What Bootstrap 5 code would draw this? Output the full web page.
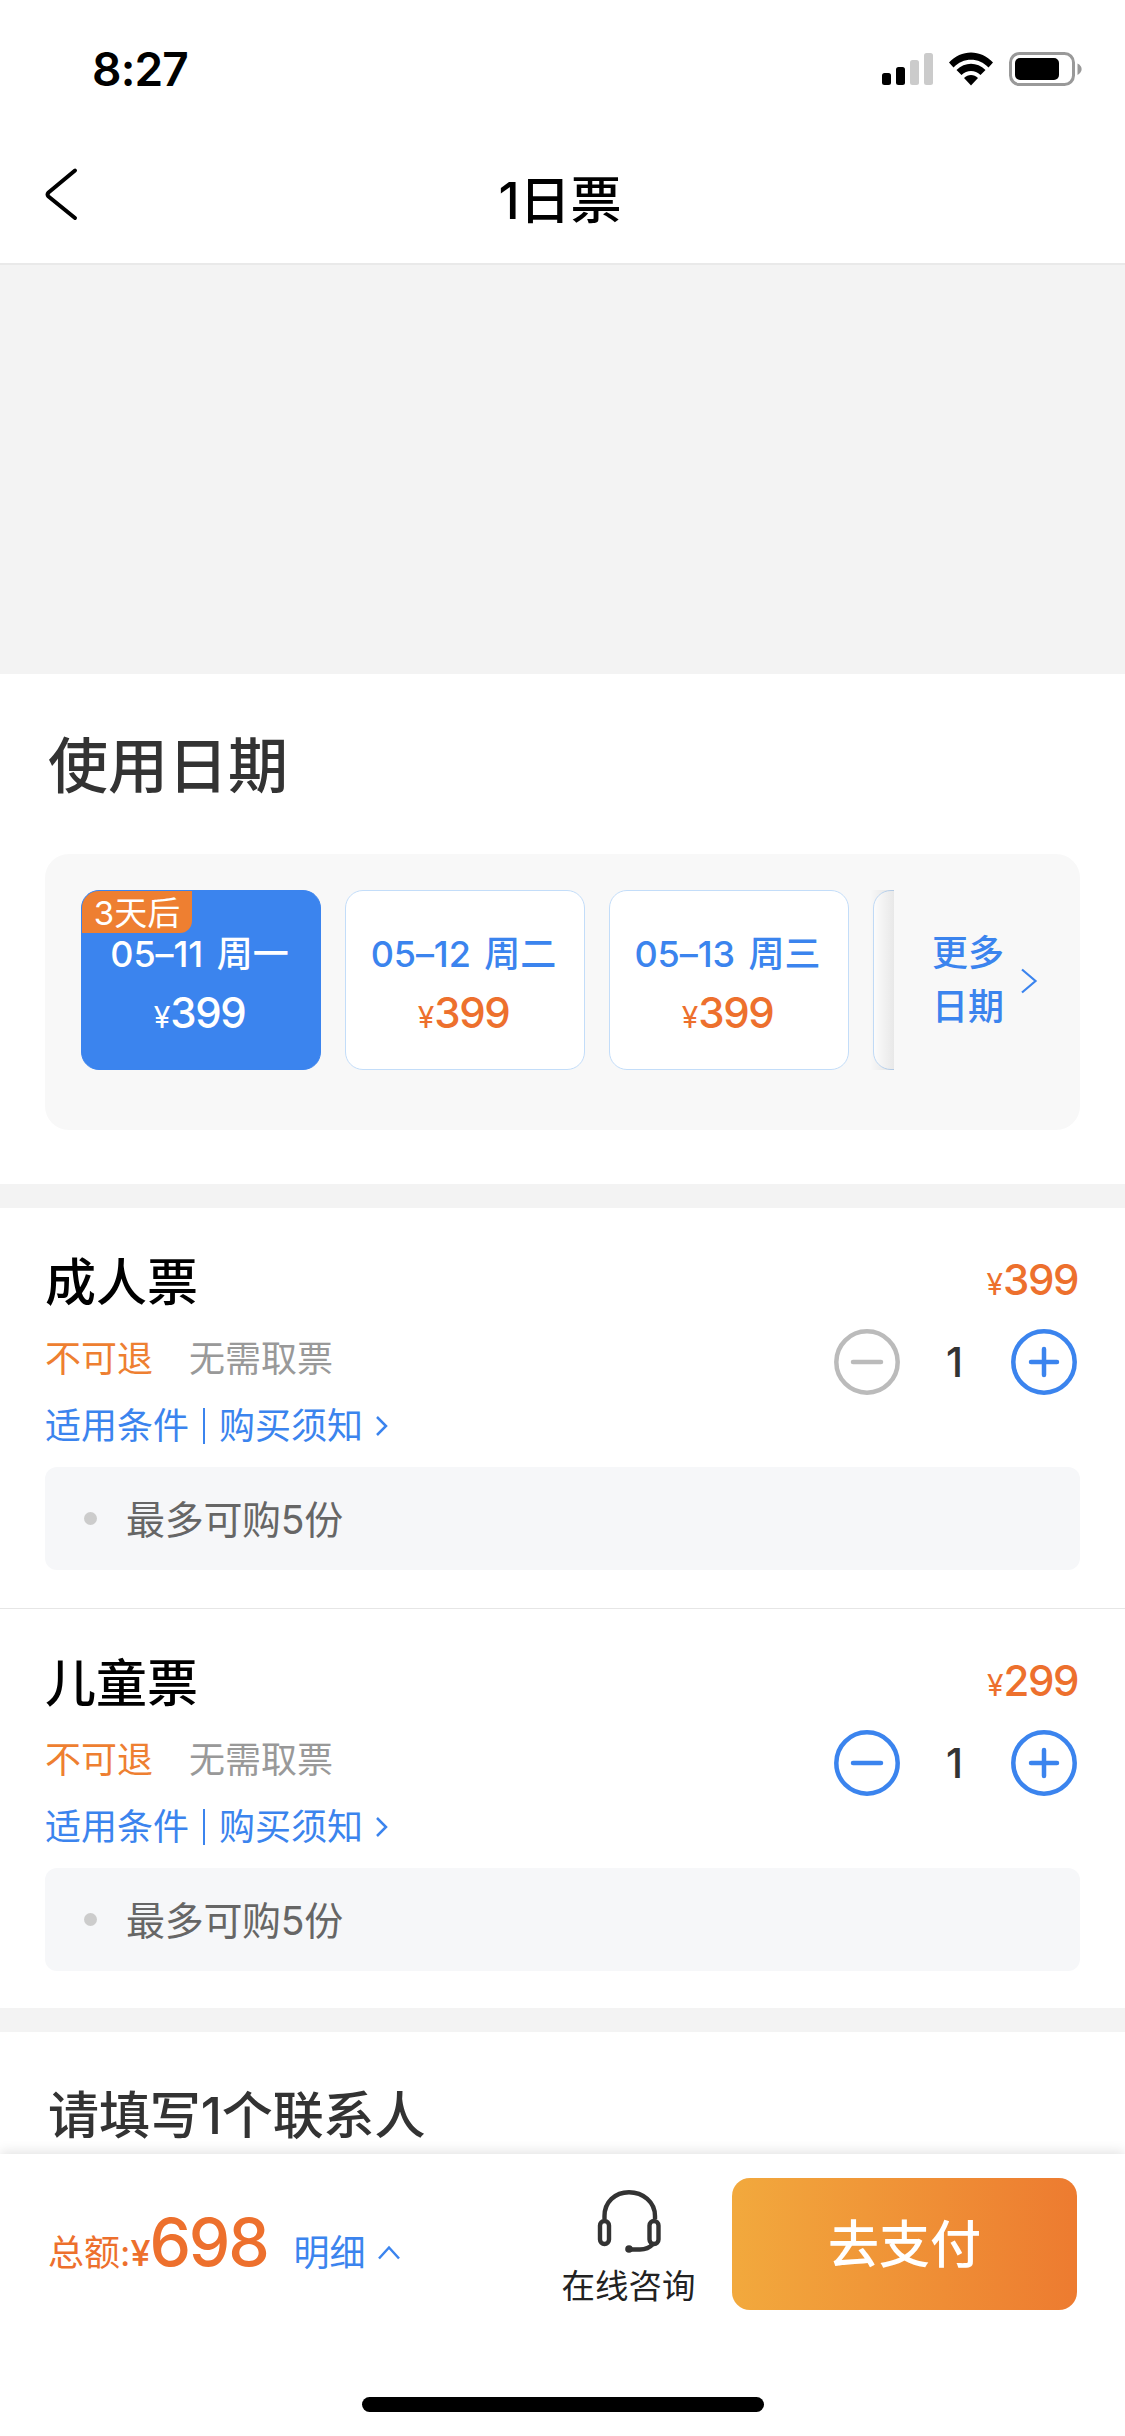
<!DOCTYPE html>
<html lang="zh-CN">
<head>
<meta charset="utf-8">
<meta name="viewport" content="width=device-width, initial-scale=1">
<title>1日票</title>
<link rel="stylesheet" href="https://cdn.jsdelivr.net/npm/bootstrap@5.3.0/dist/css/bootstrap.min.css">
<style>
  :root { --blue: #3b84ee; --orange: #ed702d; --warm: #ee7f31; }
  body { font-family: Inter, "Noto Sans CJK SC", sans-serif; color: #333; height: 2436px; overflow: hidden; font-size: 36px; line-height: 1; }
  body > * { flex-shrink: 0; }
  svg { display: block; flex: none; }
  .c-blue { color: var(--blue); }
  .c-orange { color: var(--orange); }
  .c-warm { color: var(--warm); }
  .c-gray { color: #999; }
  .statusbar { height: 138px; padding: 0 42px 0 92px; }
  .clock { font-size: 46px; font-weight: 600; color: #000; letter-spacing: -.8px; }
  .titlebar { height: 127px; border-bottom: 2px solid #e9e9e9; padding: 0 45px 0 44px; }
  .titlebar svg { margin-bottom: 14px; }
  .titlebar h1 { font-size: 51px; font-weight: 500; color: #000; padding-right: 38px; }
  .hero { height: 409px; background: #f3f3f3; }
  .dates { height: 510px; padding: 62px 45px 0; }
  .dates h2 { font-size: 60px; line-height: 60px; font-weight: 500; margin: 0 0 58px 3px; }
  .datepanel { height: 276px; background: #f8f8f8; border-radius: 24px; padding: 36px; }
  .datestrip { width: 813px; height: 180px; gap: 24px; }
  .daycard { width: 240px; height: 180px; flex: none; border: 1px solid #c3ddf9; border-radius: 18px; background: #fff; padding-top: 45px; }
  .daycard.active { background: var(--blue); border-color: var(--blue); color: #fff; }
  .daytext { font-weight: 500; height: 36px; line-height: 36px; letter-spacing: -.1px; word-spacing: 4px; white-space: pre; margin-left: -3px; }
  .zh { letter-spacing: 0; }
  .price { font-size: 42px; font-weight: 500; letter-spacing: -1.4px; line-height: 42px; }
  .price small { font-size: 30px; font-weight: 400; letter-spacing: 0; }
  .daycard .price { margin: 20px 3px 0 0; }
  .flag { left: 0; top: 0; width: 110px; height: 42px; background: var(--warm); color: #fff; font-size: 33px; line-height: 44px; border-radius: 17px 0 12px 0; }
  .fade-edge { right: 0; top: 0; width: 24px; height: 180px; background: linear-gradient(90deg, rgba(0,0,0,0), rgba(0,0,0,.09)); }
  .more { font-weight: 500; line-height: 54px; padding-left: 38px; height: 180px; }
  .more svg { margin-left: 15px; }
  .gapbar { height: 24px; background: #f3f3f3; }
  .ticket { height: 399px; padding: 0 45px; }
  .ticket.ruled { height: 401px; border-bottom: 1px solid #e6e6e6; }
  .ticket h3 { font-size: 51px; line-height: 51px; font-weight: 500; color: #000; margin: 49px 0 0; }
  .tags { margin-top: 33px; gap: 36px; line-height: 36px; }
  .links { margin-top: 31px; line-height: 36px; }
  .links svg { margin-left: 13px; }
  .sep { width: 2px; height: 36px; background: var(--blue); margin: 0 14px; }
  .limit { height: 103px; margin-top: 23px; border-radius: 12px; background: #f6f7f9; color: #666; font-size: 39px; letter-spacing: -.3px; padding-left: 39px; }
  .limit span { padding-top: 1px; }
  .dot { width: 13px; height: 13px; border-radius: 50%; background: #ccc; margin-right: 29px; }
  .ticket .price { margin-top: 51px; margin-right: 2px; }
  .stepper { margin-top: 24px; width: 246px; padding-right: 3px; }
  .count { font-size: 41px; font-weight: 500; padding-right: 2px; }
  .contact { height: 122px; padding: 58px 48px 0; }
  .contact h2 { font-size: 51px; line-height: 51px; font-weight: 500; margin: 0; letter-spacing: -.1px; }
  .footerbar { height: 282px; background: #fff; box-shadow: 0 -2px 12px rgba(0,0,0,.12); }
  .actions { height: 180px; padding: 0 48px; }
  .total { width: 510px; padding-bottom: 4px; }
  .detail { margin-left: 26px; }
  .detail svg { margin-left: 10px; }
  .sum { font-size: 66px; font-weight: 550; letter-spacing: -2.2px; margin-left: -1px; }
  .helpdesk { width: 141px; font-size: 33.5px; color: #222; padding-top: 3px; }
  .pay { width: 345px; height: 132px; border: 0; border-radius: 18px; color: #fff; font-size: 51px; font-weight: 500; line-height: 134px; background: linear-gradient(90deg, #f2a93d, #ed7b30); }
  .homebar { width: 402px; height: 15px; border-radius: 8px; background: #000; margin: 63px auto 0; }
</style>
</head>
<body class="d-flex flex-column bg-white">
  <header>
    <div class="statusbar d-flex align-items-center justify-content-between">
      <span class="clock">8:27</span>
      <svg width="202" height="36" viewBox="881 51 202 36">
        <rect x="882" y="73" width="9" height="12" rx="2.5"/><rect x="896" y="67" width="9" height="18" rx="2.5"/>
        <rect x="910" y="60" width="9" height="25" rx="2.5" fill="#cbcbcb"/><rect x="924" y="53" width="9" height="32" rx="2.5" fill="#cbcbcb"/>
        <path d="M949 62.5C961 49 981 49 993 62.5L988.5 67.5C979 57 963 57 953.500 67.500Z"/>
        <path d="M956.500 70C965 61.500 977 61.500 985.500 70L980.500 75C975 69.500 967 69.500 961.500 75Z"/>
        <path d="M964 78C968 74 974 74 978 78L971 85.500Z"/>
        <rect x="1010.500" y="53.500" width="63" height="31" rx="9" fill="none" stroke="#999" stroke-width="3"/>
        <rect x="1015" y="58" width="44" height="22" rx="5"/>
        <path d="M1077.500 63.500C1083 66 1083 72 1077.500 75Z" fill="#999"/>
      </svg>
    </div>
    <div class="titlebar d-flex align-items-center">
      <svg width="34" height="54" viewBox="0 0 34 54" fill="none" stroke="#000" stroke-width="4" stroke-linecap="round" stroke-linejoin="round"><path d="M31 3.500L4.500 25.500Q2.500 27.500 4.500 29.500L31 51"/></svg>
      <h1 class="flex-fill text-center mb-0">1日票</h1>
    </div>
  </header>
  <div class="hero"></div>
  <section class="dates">
    <h2>使用日期</h2>
    <div class="datepanel d-flex">
      <div class="datestrip d-flex overflow-hidden position-relative">
        <div class="daycard active text-center position-relative">
          <span class="flag position-absolute">3天后</span>
          <div class="daytext">05–11 <span class="zh">周一</span></div>
          <div class="price"><small>¥</small>399</div>
        </div>
        <div class="daycard text-center">
          <div class="daytext c-blue">05–12 <span class="zh">周二</span></div>
          <div class="price c-orange"><small>¥</small>399</div>
        </div>
        <div class="daycard text-center">
          <div class="daytext c-blue">05–13 <span class="zh">周三</span></div>
          <div class="price c-orange"><small>¥</small>399</div>
        </div>
        <div class="daycard"></div>
        <div class="fade-edge position-absolute"></div>
      </div>
      <div class="more c-blue d-flex align-items-center">
        <span>更多<br>日期</span>
        <svg width="20" height="27" viewBox="0 0 20 27" fill="none" stroke="#3b84ee" stroke-width="2.200"><path d="M3 2.500L16.500 14L3 25.500"/></svg>
      </div>
    </div>
  </section>
  <div class="gapbar"></div>
  <section class="ticket ruled">
    <div class="d-flex justify-content-between">
      <div>
        <h3>成人票</h3>
        <div class="tags d-flex"><span class="c-warm">不可退</span><span class="c-gray">无需取票</span></div>
        <div class="links c-blue d-flex align-items-center"><span>适用条件</span><i class="sep"></i><span>购买须知</span>
          <svg width="12" height="22" viewBox="0 0 12 22" fill="none" stroke="#3b84ee" stroke-width="2.500"><path d="M1 2L10 11L1 20"/></svg></div>
      </div>
      <div class="d-flex flex-column align-items-end">
        <div class="price c-orange"><small>¥</small>399</div>
        <div class="stepper d-flex align-items-center justify-content-between">
          <svg width="66" height="66" viewBox="0 0 66 66" fill="none" stroke="#bbb" stroke-width="4.500" stroke-linecap="round"><circle cx="33" cy="33" r="30.700"/><path d="M19 33H47"/></svg>
          <span class="count">1</span>
          <svg width="66" height="66" viewBox="0 0 66 66" fill="none" stroke="#3b84ee" stroke-width="4.500" stroke-linecap="round"><circle cx="33" cy="33" r="30.700"/><path d="M20 33H46M33 20V46"/></svg>
        </div>
      </div>
    </div>
    <div class="limit d-flex align-items-center"><i class="dot"></i><span>最多可购5份</span></div>
  </section>
  <section class="ticket">
    <div class="d-flex justify-content-between">
      <div>
        <h3>儿童票</h3>
        <div class="tags d-flex"><span class="c-warm">不可退</span><span class="c-gray">无需取票</span></div>
        <div class="links c-blue d-flex align-items-center"><span>适用条件</span><i class="sep"></i><span>购买须知</span>
          <svg width="12" height="22" viewBox="0 0 12 22" fill="none" stroke="#3b84ee" stroke-width="2.500"><path d="M1 2L10 11L1 20"/></svg></div>
      </div>
      <div class="d-flex flex-column align-items-end">
        <div class="price c-orange"><small>¥</small>299</div>
        <div class="stepper d-flex align-items-center justify-content-between">
          <svg width="66" height="66" viewBox="0 0 66 66" fill="none" stroke="#3b84ee" stroke-width="4.500" stroke-linecap="round"><circle cx="33" cy="33" r="30.700"/><path d="M19 33H47"/></svg>
          <span class="count">1</span>
          <svg width="66" height="66" viewBox="0 0 66 66" fill="none" stroke="#3b84ee" stroke-width="4.500" stroke-linecap="round"><circle cx="33" cy="33" r="30.700"/><path d="M20 33H46M33 20V46"/></svg>
        </div>
      </div>
    </div>
    <div class="limit d-flex align-items-center"><i class="dot"></i><span>最多可购5份</span></div>
  </section>
  <div class="gapbar"></div>
  <section class="contact"><h2>请填写1个联系人</h2></section>
  <footer class="footerbar position-relative">
    <div class="actions d-flex align-items-center">
      <div class="total d-flex align-items-baseline">
        <span class="c-orange">总额:<span class="fw-medium">¥</span></span><span class="sum c-orange">698</span>
        <span class="detail c-blue d-flex align-items-center">明细
          <svg width="26" height="18" viewBox="0 0 26 18" fill="none" stroke="#3b84ee" stroke-width="2.500"><path d="M3 14.500L13 3.500L23 14.500"/></svg></span>
      </div>
      <div class="helpdesk d-flex flex-column align-items-center">
        <svg width="66" height="66" viewBox="0 0 66 66" fill="none" stroke="#333" stroke-width="4.400"><path d="M8.500 31V28C8.500 14 19 4.200 33 4.200S59 14 59 28V31"/><rect x="4" y="33" width="9" height="23" rx="4.500"/><rect x="53.500" y="33" width="9" height="23" rx="4.500"/><path d="M57 56Q52 61.500 44 61.500H33"/><circle cx="33" cy="61" r="3.800" fill="#333" stroke="none"/></svg>
        <span class="mt-3 text-nowrap">在线咨询</span>
      </div>
      <button class="pay ms-auto p-0">去支付</button>
    </div>
    <div class="homebar"></div>
  </footer>
<script src="https://cdn.jsdelivr.net/npm/bootstrap@5.3.0/dist/js/bootstrap.bundle.min.js"></script>
</body>
</html>
